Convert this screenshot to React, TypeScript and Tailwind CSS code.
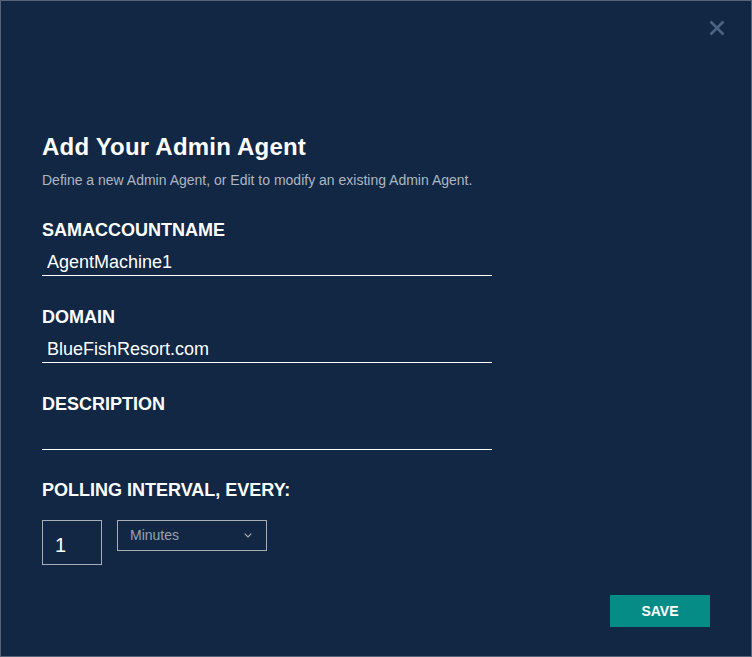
import React, { useState } from 'react';

const fieldLabel = 'text-[18px] leading-[20px] font-bold text-white';
const underlineInput =
  'w-[450px] h-[24px] pl-[5px] pb-[3px] text-[18px] leading-[20px] text-white bg-transparent border-b border-white outline-none';

export default function App() {
  const [name, setName] = useState('AgentMachine1');
  const [domain, setDomain] = useState('BlueFishResort.com');
  const [description, setDescription] = useState('');
  const [interval, setInterval] = useState('1');

  return (
    <div className="w-[752px] h-[657px] bg-[#112744] border border-[#56647a] relative font-['Liberation_Sans',Arial,sans-serif] flex flex-col">
      <button className="absolute top-[19px] right-[26px] w-[16px] h-[16px]" aria-label="Close">
        <svg viewBox="0 0 16 16" className="w-[16px] h-[16px]">
          <path d="M1.5 1.5L14.5 14.5M14.5 1.5L1.5 14.5" stroke="#4c6381" strokeWidth="2.6" strokeLinecap="butt" />
        </svg>
      </button>

      <div className="pl-[41px] pt-[132px] flex flex-col">
        <h1 className="text-[24px] leading-[28px] font-bold text-white tracking-[0.2px]">Add Your Admin Agent</h1>
        <p className="mt-[11px] text-[14px] leading-[16px] text-[#aeb6c2]">
          Define a new Admin Agent, or Edit to modify an existing Admin Agent.
        </p>

        <label className={`mt-[32px] ${fieldLabel}`}>SAMACCOUNTNAME</label>
        <input className={`mt-[12px] ${underlineInput}`} value={name} onChange={e => setName(e.target.value)} />

        <label className={`mt-[31px] ${fieldLabel}`}>DOMAIN</label>
        <input className={`mt-[12px] ${underlineInput}`} value={domain} onChange={e => setDomain(e.target.value)} />

        <label className={`mt-[31px] ${fieldLabel}`}>DESCRIPTION</label>
        <input
          className={`mt-[12px] ${underlineInput}`}
          value={description}
          onChange={e => setDescription(e.target.value)}
        />

        <label className={`mt-[30px] ${fieldLabel}`}>POLLING INTERVAL, EVERY:</label>
        <div className="mt-[20px] flex items-start gap-[15px]">
          <input
            className="w-[60px] h-[45px] border border-[#a9aeb6] bg-transparent pl-[12px] pt-[5px] text-[20px] text-white outline-none"
            value={interval}
            onChange={e => setInterval(e.target.value)}
          />
          <div className="w-[150px] h-[31px] border border-[#a9aeb6] flex items-center justify-between pl-[12px] pr-[14px]">
            <span className="text-[14px] text-[#98a2b0]">Minutes</span>
            <svg viewBox="0 0 8 5" className="w-[8px] h-[5px]">
              <path d="M0.7 0.7L4 4L7.3 0.7" fill="none" stroke="#a9aeb6" strokeWidth="1.2" />
            </svg>
          </div>
        </div>
      </div>

      <div className="mt-[30px] flex justify-end pr-[41px]">
        <button className="w-[100px] h-[32px] bg-[#068c87] text-white text-[14px] font-bold">SAVE</button>
      </div>
    </div>
  );
}
